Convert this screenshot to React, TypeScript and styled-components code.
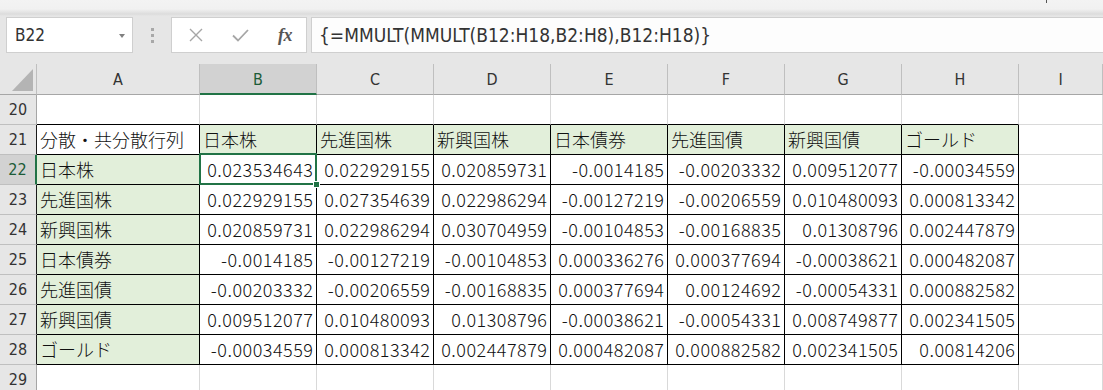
import React from 'react';
import styled, { createGlobalStyle, css } from 'styled-components';

const GREEN = '#217346';
const GRID = '#d9d9d9';
const HEAD_LINE = '#bfbfbf';

const COLS = ['A', 'B', 'C', 'D', 'E', 'F', 'G', 'H', 'I'];
const ASSETS = ['日本株', '先進国株', '新興国株', '日本債券', '先進国債', '新興国債', 'ゴールド'];
const MATRIX = [
  ['0.023534643', '0.022929155', '0.020859731', '-0.0014185', '-0.00203332', '0.009512077', '-0.00034559'],
  ['0.022929155', '0.027354639', '0.022986294', '-0.00127219', '-0.00206559', '0.010480093', '0.000813342'],
  ['0.020859731', '0.022986294', '0.030704959', '-0.00104853', '-0.00168835', '0.01308796', '0.002447879'],
  ['-0.0014185', '-0.00127219', '-0.00104853', '0.000336276', '0.000377694', '-0.00038621', '0.000482087'],
  ['-0.00203332', '-0.00206559', '-0.00168835', '0.000377694', '0.00124692', '-0.00054331', '0.000882582'],
  ['0.009512077', '0.010480093', '0.01308796', '-0.00038621', '-0.00054331', '0.008749877', '0.002341505'],
  ['-0.00034559', '0.000813342', '0.002447879', '0.000482087', '0.000882582', '0.002341505', '0.00814206'],
];

type CellData = { text: string; fill?: boolean; num?: boolean; edge?: boolean; edgeBottom?: boolean };

const GlobalStyle = createGlobalStyle`
  body {
    margin: 0;
    background: #fff;
    overflow: hidden;
  }
`;

const App: React.FC = () => {
  const rows: { num: number; cells: CellData[] }[] = [];
  rows.push({ num: 20, cells: COLS.map((c) => ({ text: '', edgeBottom: c !== 'I' })) });
  rows.push({
    num: 21,
    cells: [{ text: '分散・共分散行列', edge: true }, ...ASSETS.map((a) => ({ text: a, fill: true, edge: true })), { text: '' }],
  });
  MATRIX.forEach((r, i) => {
    rows.push({
      num: 22 + i,
      cells: [{ text: ASSETS[i], fill: true, edge: true }, ...r.map((v) => ({ text: v, num: true, edge: true })), { text: '' }],
    });
  });
  rows.push({ num: 29, cells: COLS.map(() => ({ text: '' })) });

  return (
    <>
      <GlobalStyle />
      <Window>
        <RibbonEdge>
          <Caret />
        </RibbonEdge>
        <FormulaBar>
          <NameBox>
            <span>B22</span>
            <DropArrow />
          </NameBox>
          <Grip>
            <i />
            <i />
            <i />
          </Grip>
          <FuncBox>
            <svg width="14" height="14" viewBox="0 0 14 14">
              <path d="M1 1 L13 13 M13 1 L1 13" stroke="#a6a6a6" strokeWidth="1.4" fill="none" />
            </svg>
            <svg width="17" height="13" viewBox="0 0 17 13">
              <path d="M1 6.5 L6 11.5 L16 1" stroke="#a6a6a6" strokeWidth="1.8" fill="none" />
            </svg>
            <Fx>fx</Fx>
          </FuncBox>
          <FormulaInput>{'{=MMULT(MMULT(B12:H18,B2:H8),B12:H18)}'}</FormulaInput>
        </FormulaBar>
        <Sheet>
          <Corner>
            <SelectAll />
          </Corner>
          {COLS.map((c) => (
            <ColHeader key={c} $active={c === 'B'}>
              {c}
            </ColHeader>
          ))}
          {rows.map((r) => (
            <React.Fragment key={r.num}>
              <RowHeader $active={r.num === 22} $edge={r.num >= 21 && r.num <= 28}>
                {r.num}
              </RowHeader>
              {r.cells.map((cell, ci) => (
                <Cell
                  key={ci}
                  $fill={!!cell.fill}
                  $num={!!cell.num}
                  $edge={!!cell.edge}
                  $edgeBottom={!!cell.edgeBottom}
                  $active={r.num === 22 && ci === 1}
                >
                  {cell.text}
                </Cell>
              ))}
            </React.Fragment>
          ))}
        </Sheet>
      </Window>
    </>
  );
};

export default App;

const Window = styled.div`
  width: 1103px;
  height: 390px;
  overflow: hidden;
  background: #fff;
  font-family: 'Noto Sans CJK JP', 'DejaVu Sans', sans-serif;
`;

const RibbonEdge = styled.div`
  position: relative;
  height: 16px;
  background: linear-gradient(#f3f3f3 0, #f1f1f1 9px, #dcdcdc 14px, #e6e6e6 16px);
`;

const Caret = styled.div`
  position: absolute;
  left: 1046px;
  top: 0;
  width: 1px;
  height: 3px;
  background: #555;
`;

const FormulaBar = styled.div`
  display: flex;
  align-items: flex-start;
  height: 48px;
  box-sizing: border-box;
  padding: 1px 0 0 6px;
  background: #e6e6e6;
`;

const boxBase = css`
  box-sizing: border-box;
  height: 36px;
  background: #fff;
  border: 1px solid #cfcfcf;
  display: flex;
  align-items: center;
`;

const NameBox = styled.div`
  ${boxBase};
  width: 127px;
  padding: 0 7px 0 8px;
  justify-content: space-between;
  font-family: 'DejaVu Sans Condensed', 'DejaVu Sans', sans-serif;
  font-size: 17px;
  color: #333;
`;

const DropArrow = styled.span`
  width: 0;
  height: 0;
  border-left: 3.5px solid transparent;
  border-right: 3.5px solid transparent;
  border-top: 4px solid #808080;
  margin-top: 1px;
`;

const Grip = styled.div`
  width: 38px;
  height: 36px;
  display: flex;
  flex-direction: column;
  align-items: center;
  justify-content: center;
  gap: 3px;

  i {
    display: block;
    width: 3px;
    height: 3px;
    background: #a8a8a8;
  }
`;

const FuncBox = styled.div`
  ${boxBase};
  width: 136px;
  padding: 0 14px 0 17px;
  justify-content: space-between;
`;

const Fx = styled.span`
  font-family: 'Liberation Serif', serif;
  font-style: italic;
  font-weight: bold;
  font-size: 18px;
  color: #555;
  letter-spacing: -0.5px;
`;

const FormulaInput = styled.div`
  ${boxBase};
  flex: 1;
  margin-left: 4px;
  border-right: none;
  background: #fdfdfd;
  padding-left: 7px;
  font-family: 'DejaVu Sans Condensed', 'DejaVu Sans', sans-serif;
  font-size: 19px;
  color: #333;
`;

const Sheet = styled.div`
  display: grid;
  grid-template-columns: 37px 163px repeat(7, 117px) 1fr;
  grid-template-rows: 31px repeat(10, 30px);
`;

const Corner = styled.div`
  position: relative;
  background: #e6e6e6;
  border-right: 1px solid ${HEAD_LINE};
  border-bottom: 1px solid #a6a6a6;
`;

const SelectAll = styled.div`
  position: absolute;
  right: 3px;
  bottom: 3px;
  width: 0;
  height: 0;
  border-left: 21px solid transparent;
  border-bottom: 22px solid #b4b4b4;
`;

const headerText = css`
  box-sizing: border-box;
  display: flex;
  align-items: center;
  justify-content: center;
  font-family: 'DejaVu Sans Condensed', 'DejaVu Sans', sans-serif;
  font-size: 16px;
`;

const ColHeader = styled.div<{ $active: boolean }>`
  ${headerText};
  background: ${({ $active }) => ($active ? '#d2d2d2' : '#e6e6e6')};
  color: ${({ $active }) => ($active ? '#1d5c38' : '#333')};
  border-right: 1px solid ${HEAD_LINE};
  border-bottom: ${({ $active }) => ($active ? `2px solid ${GREEN}` : '1px solid #a6a6a6')};
  padding-top: ${({ $active }) => ($active ? '1px' : '0')};
`;

const RowHeader = styled.div<{ $active: boolean; $edge: boolean }>`
  ${headerText};
  background: ${({ $active }) => ($active ? '#d2d2d2' : '#e6e6e6')};
  color: ${({ $active }) => ($active ? '#1d5c38' : '#333')};
  border-bottom: 1px solid ${HEAD_LINE};
  border-right: ${({ $active, $edge }) =>
    $active ? `2px solid ${GREEN}` : `1px solid ${$edge ? '#1a1a1a' : '#a6a6a6'}`};
`;

const Cell = styled.div<{ $fill: boolean; $num: boolean; $edge: boolean; $edgeBottom: boolean; $active: boolean }>`
  box-sizing: border-box;
  display: flex;
  align-items: center;
  justify-content: ${({ $num }) => ($num ? 'flex-end' : 'flex-start')};
  padding: 0 ${({ $num }) => ($num ? '2.5px' : '3px')} 1px 3px;
  white-space: nowrap;
  font-size: 18px;
  font-weight: 300;
  letter-spacing: ${({ $num }) => ($num ? '0.5px' : '0')};
  color: #111;
  background: ${({ $fill }) => ($fill ? '#e2efda' : '#fff')};
  border-right: 1px solid ${({ $edge }) => ($edge ? '#000' : GRID)};
  border-bottom: 1px solid ${({ $edge, $edgeBottom }) => ($edge || $edgeBottom ? '#000' : GRID)};

  ${({ $active }) =>
    $active &&
    css`
      position: relative;

      &::before {
        content: '';
        position: absolute;
        left: -1px;
        top: -2px;
        right: -1px;
        bottom: -1px;
        border: 2px solid ${GREEN};
      }

      &::after {
        content: '';
        position: absolute;
        right: -4px;
        bottom: -4px;
        width: 7px;
        height: 7px;
        box-sizing: border-box;
        background: ${GREEN};
        border: 1px solid #fff;
      }
    `}
`;
